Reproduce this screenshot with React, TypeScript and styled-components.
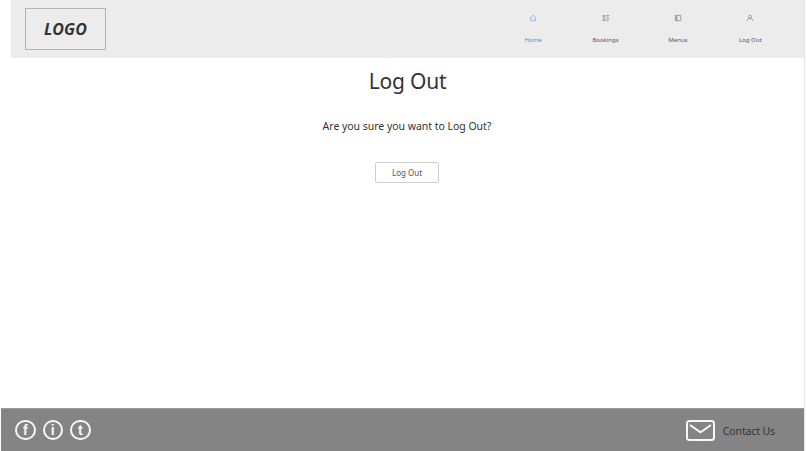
import React from "react";
import styled, { createGlobalStyle } from "styled-components";

const GlobalStyle = createGlobalStyle`
  * { box-sizing: border-box; }
  body { margin: 0; background: #fff; overflow: hidden; }
`;

const Page = styled.div`
  display: flex;
  flex-direction: column;
  width: 805px;
  height: 451px;
  border-right: 1px solid #e6e6e6;
  font-family: "Noto Sans", "Open Sans", sans-serif;
  color: #333;
  white-space: nowrap;
`;

const Header = styled.header`
  display: flex;
  justify-content: space-between;
  height: 58px;
  margin-left: 11px;
  padding: 8px 17.5px 0 14px;
  background: #ececec;
`;

const Logo = styled.div`
  display: flex;
  align-items: center;
  justify-content: center;
  width: 81px;
  height: 42px;
  border: 1px solid #b2b2b2;
  font-family: "Open Sans", "Noto Sans", sans-serif;
  font-size: 16px;
  font-weight: 700;
  font-style: italic;
  letter-spacing: 0.1px;
`;

const Nav = styled.nav`
  display: flex;
`;

const NavItem = styled.a<{ $active?: boolean }>`
  display: flex;
  flex-direction: column;
  align-items: center;
  gap: 14px;
  width: 72.4px;
  padding-top: 6px;
  color: ${(p) => (p.$active ? "#4f88e6" : "#555")};
  font-size: 6px;
  line-height: 8px;
`;

const NavIcon = styled.svg`
  width: 8px;
  height: 8px;
  fill: none;
  stroke: currentColor;
  stroke-width: 0.6;
  opacity: 0.8;
`;

const Main = styled.main`
  display: flex;
  flex: 1;
  flex-direction: column;
  align-items: center;
  margin-left: 10px;
`;

const Title = styled.h1`
  margin: 8px 0 0;
  padding-left: 1px;
  font-size: 21px;
  font-weight: 400;
  line-height: 30px;
  letter-spacing: -0.2px;
`;

const Question = styled.p`
  margin: 23px 0 0;
  font-size: 10.5px;
  line-height: 15px;
  letter-spacing: -0.03px;
`;

const Button = styled.button`
  width: 64px;
  height: 21px;
  margin-top: 28px;
  padding: 0;
  border: 1px solid #ccc;
  border-radius: 2px;
  background: #fff;
  color: #555;
  font-family: inherit;
  font-size: 8px;
  line-height: 19px;
`;

const Footer = styled.footer`
  display: flex;
  align-items: center;
  justify-content: space-between;
  height: 43px;
  margin-left: 1px;
  padding: 0 29px 0 14px;
  border-top: 1px solid #999;
  background: #848484;
`;

const Socials = styled.div`
  display: flex;
  gap: 7px;
`;

const Social = styled.a`
  display: flex;
  align-items: center;
  justify-content: center;
  width: 20.5px;
  height: 20.5px;
  border: 2px solid #f7f7f7;
  border-radius: 50%;
  color: #f7f7f7;
  font-family: "Liberation Sans", sans-serif;
  font-size: 14px;
  font-weight: 700;
  line-height: 14px;
`;

const Contact = styled.a`
  display: flex;
  align-items: center;
  gap: 8px;
  font-size: 10.5px;
  line-height: 14px;
  letter-spacing: -0.12px;
`;

const ContactLabel = styled.span`
  padding-top: 2px;
`;

const Envelope = styled.svg`
  width: 29px;
  height: 21px;
  fill: none;
  stroke: #f7f7f7;
  stroke-width: 2;
`;

const navItems = [
  {
    label: "Home",
    icon: <path d="M.8 4.2 4 1.1l3.2 3.1M1.6 3.6v3.3h1.5a.9.9 0 0 1 1.8 0h1.5V3.6" />,
  },
  {
    label: "Bookings",
    icon: <path d="M1 1.5h2v1.7H1zM1 5h2v1.7H1zM4.3 1.5h3M4.3 3.2h2.5M4.3 5h3M4.3 6.7h2" />,
  },
  {
    label: "Menus",
    icon: <path d="M1.4 1.4h5.3v5.3H1.4zM3 1.4v5.3M1.4 3.2H3M1.4 5H3" />,
  },
  {
    label: "Log Out",
    icon: <path d="M2.5 2.7a1.5 1.5 0 1 1 3 0 1.5 1.5 0 0 1-3 0M1.2 7c.2-1.7 1.1-2.8 2.8-2.8S6.6 5.3 6.8 7" />,
  },
];

export default function App() {
  return (
    <>
      <GlobalStyle />
      <Page>
        <Header>
          <Logo>LOGO</Logo>
          <Nav>
            {navItems.map(({ label, icon }) => (
              <NavItem key={label} $active={label === "Home"}>
                <NavIcon viewBox="0 0 8 8">{icon}</NavIcon>
                {label}
              </NavItem>
            ))}
          </Nav>
        </Header>
        <Main>
          <Title>Log Out</Title>
          <Question>Are you sure you want to Log Out?</Question>
          <Button>Log Out</Button>
        </Main>
        <Footer>
          <Socials>
            {["f", "i", "t"].map((name) => (
              <Social key={name}>{name}</Social>
            ))}
          </Socials>
          <Contact>
            <Envelope viewBox="0 0 29 21">
              <rect x="1" y="1" width="27" height="19" rx="2.5" />
              <path d="m4 5 10.5 7.2L25 5" />
            </Envelope>
            <ContactLabel>Contact Us</ContactLabel>
          </Contact>
        </Footer>
      </Page>
    </>
  );
}
